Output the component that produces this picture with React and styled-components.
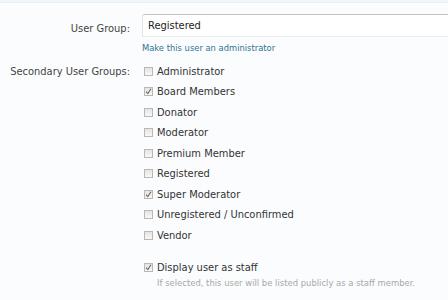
import styled, { createGlobalStyle } from "styled-components";

const GlobalStyle = createGlobalStyle`
  body {
    margin: 0;
    background: #fbfcfe;
    font-family: "DejaVu Sans Condensed", "DejaVu Sans", sans-serif;
    font-size: 11px;
    color: #333;
  }
`;

const groups = [
  { name: "Administrator", checked: false },
  { name: "Board Members", checked: true },
  { name: "Donator", checked: false },
  { name: "Moderator", checked: false },
  { name: "Premium Member", checked: false },
  { name: "Registered", checked: false },
  { name: "Super Moderator", checked: true },
  { name: "Unregistered / Unconfirmed", checked: false },
  { name: "Vendor", checked: false },
];

const CheckBox = ({ checked }) => (
  <Box>
    {checked && (
      <svg width="7" height="7" viewBox="0 0 7 7">
        <path d="M1 3.6 L2.8 5.6 L6 0.8" fill="none" stroke="#6a6a6a" strokeWidth="1.1" />
      </svg>
    )}
  </Box>
);

const App = () => {
  return (
    <>
      <GlobalStyle />
      <Page>
        <TopBand />
        <Row className="group-row">
          <Label className="input-label">User Group:</Label>
          <Field>
            <TextInput>Registered</TextInput>
            <Link>Make this user an administrator</Link>
          </Field>
        </Row>
        <Row>
          <Label>Secondary User Groups:</Label>
          <Field>
            <List>
              {groups.map((g) => (
                <Option key={g.name}>
                  <CheckBox checked={g.checked} />
                  <span>{g.name}</span>
                </Option>
              ))}
            </List>
          </Field>
        </Row>
        <Row className="staff-row">
          <Label />
          <Field>
            <Option>
              <CheckBox checked />
              <span>Display user as staff</span>
            </Option>
            <Hint>If selected, this user will be listed publicly as a staff member.</Hint>
          </Field>
        </Row>
      </Page>
    </>
  );
};

const Page = styled.div`
  display: flex;
  flex-direction: column;
  width: 448px;
  height: 300px;
  overflow: hidden;
`;

const TopBand = styled.div`
  height: 4px;
  background: #f1f6fa;
  border-bottom: 1px solid #e8eff5;
  margin-bottom: 11px;
`;

const Row = styled.div`
  display: grid;
  grid-template-columns: 130px 1fr;
  column-gap: 12px;
  margin-bottom: 12px;

  &.group-row {
    margin-bottom: 11px;
  }

  &.staff-row {
    margin-top: 6px;
  }
`;

const Label = styled.div`
  text-align: right;
  padding-top: 1px;
  color: #444;

  &.input-label {
    padding-top: 8px;
  }
`;

const Field = styled.div`
  display: flex;
  flex-direction: column;
`;

const TextInput = styled.div`
  height: 21px;
  border-top: 1px solid #c4c4c4;
  border-left: 1px solid #e4e4e4;
  border-bottom: 1px solid #ececec;
  border-top-left-radius: 3px;
  background: #fff;
  padding: 0 5px;
  line-height: 21px;
  color: #222;
  margin-right: -10px;
`;

const Link = styled.div`
  color: #2c7396;
  font-size: 9.3px;
  margin-top: 5px;
`;

const List = styled.div`
  display: flex;
  flex-direction: column;
  gap: 6.5px;
`;

const Option = styled.div`
  display: flex;
  align-items: center;
  gap: 4px;
  height: 14px;
  padding-left: 2px;
  color: #333;
`;

const Box = styled.div`
  width: 7px;
  height: 7px;
  border: 1px solid #b8b8b8;
  background: linear-gradient(#e4e4e4, #f8f8f8);
  display: flex;
  align-items: center;
  justify-content: center;
  flex-shrink: 0;
`;

const Hint = styled.div`
  color: #a8a8a8;
  font-size: 9.4px;
  margin-top: 3px;
  padding-left: 15px;
`;

export default App;
